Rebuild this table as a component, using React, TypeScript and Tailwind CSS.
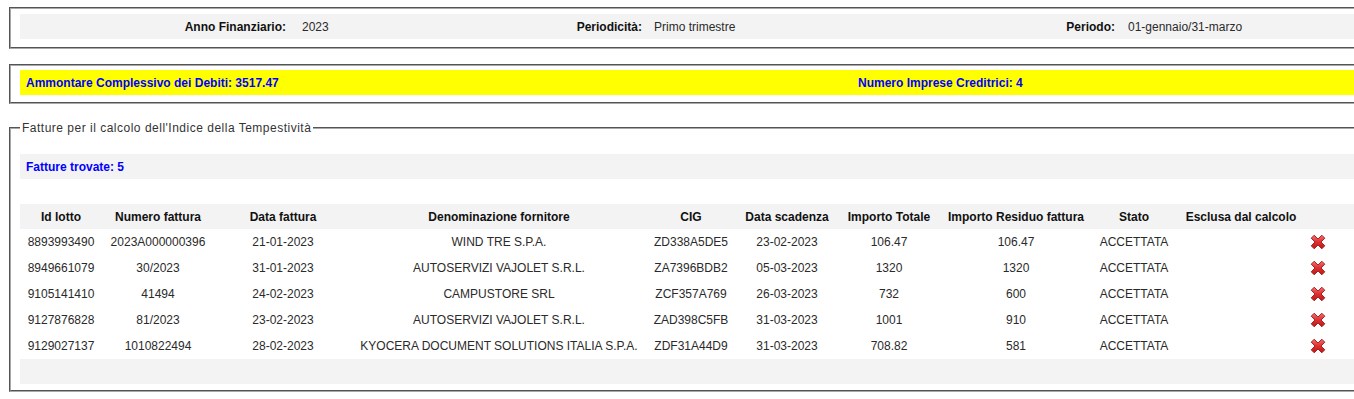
import React from "react";

const rows = [
  ["8893993490", "2023A000000396", "21-01-2023", "WIND TRE S.P.A.", "ZD338A5DE5", "23-02-2023", "106.47", "106.47", "ACCETTATA"],
  ["8949661079", "30/2023", "31-01-2023", "AUTOSERVIZI VAJOLET S.R.L.", "ZA7396BDB2", "05-03-2023", "1320", "1320", "ACCETTATA"],
  ["9105141410", "41494", "24-02-2023", "CAMPUSTORE SRL", "ZCF357A769", "26-03-2023", "732", "600", "ACCETTATA"],
  ["9127876828", "81/2023", "23-02-2023", "AUTOSERVIZI VAJOLET S.R.L.", "ZAD398C5FB", "31-03-2023", "1001", "910", "ACCETTATA"],
  ["9129027137", "1010822494", "28-02-2023", "KYOCERA DOCUMENT SOLUTIONS ITALIA S.P.A.", "ZDF31A44D9", "31-03-2023", "708.82", "581", "ACCETTATA"],
];

const headers = [
  "Id lotto",
  "Numero fattura",
  "Data fattura",
  "Denominazione fornitore",
  "CIG",
  "Data scadenza",
  "Importo Totale",
  "Importo Residuo fattura",
  "Stato",
  "Esclusa dal calcolo",
  "",
  "",
];

const gridCols =
  "grid grid-cols-[82px_112px_138px_294px_90px_102px_102px_152px_84px_130px_24px_1fr]";

function RedX() {
  return (
    <svg width="16" height="16" viewBox="0 0 16 16">
      <defs>
        <linearGradient id="rx" x1="0" y1="0" x2="0" y2="1">
          <stop offset="0" stopColor="#f07070" />
          <stop offset="0.5" stopColor="#dc3030" />
          <stop offset="1" stopColor="#b81818" />
        </linearGradient>
      </defs>
      <polygon
        points="1.2,4.2 4.2,1.2 8,5 11.8,1.2 14.8,4.2 11,8 14.8,11.8 11.8,14.8 8,11 4.2,14.8 1.2,11.8 5,8"
        fill="url(#rx)"
        stroke="#a01414"
        strokeWidth="0.9"
        strokeLinejoin="round"
      />
    </svg>
  );
}

export default function App() {
  return (
    <div className="w-[1354px] h-[399px] overflow-hidden bg-white font-['Liberation_Sans',Arial,sans-serif] text-[12px] text-[#2a2a2a]">
      <div className="w-[1420px] pl-[9px] pt-[7px]">
        {/* Box 1 */}
        <div className="border-2 [border-style:groove] border-[#a8a8a8] pl-[9px] pt-[5px] pb-[8px]">
          <div className="bg-[#f3f3f3] h-[25px] flex items-center">
            <div className="w-[266px] text-right font-bold text-[#111]">Anno Finanziario:</div>
            <div className="w-[200px] pl-[16px]">2023</div>
            <div className="w-[156px] text-right font-bold text-[#111]">Periodicità:</div>
            <div className="w-[300px] pl-[12px]">Primo trimestre</div>
            <div className="w-[173px] text-right font-bold text-[#111]">Periodo:</div>
            <div className="pl-[13px]">01-gennaio/31-marzo</div>
          </div>
        </div>

        {/* Box 2 */}
        <div className="mt-[15px] border-2 [border-style:groove] border-[#a8a8a8] pl-[9px] pt-[4px] pb-[7px]">
          <div className="bg-[#ffff00] h-[25px] flex items-center font-bold text-[#0000ff]">
            <div className="w-[838px] pl-[6px]">Ammontare Complessivo dei Debiti: 3517.47</div>
            <div>Numero Imprese Creditrici: 4</div>
          </div>
        </div>

        {/* Fieldset */}
        <fieldset className="mt-[15px] border-2 [border-style:groove] border-[#a8a8a8] pl-[9px] pb-[6px]">
          <legend className="px-[2px] tracking-[0.5px] text-[#333]">Fatture per il calcolo dell'Indice della Tempestività</legend>
          <div className="mt-[17px] bg-[#f3f3f3] h-[25px] flex items-center pl-[6px] font-bold text-[#0000ff]">
            Fatture trovate: 5
          </div>
          <div className="mt-[25px]">
            <div className={`${gridCols} bg-[#f3f3f3] h-[25px] items-center font-bold text-[#111]`}>
              {headers.map((h, i) => (
                <div key={i} className="text-center whitespace-nowrap">
                  {h}
                </div>
              ))}
            </div>
            {rows.map((r, ri) => (
              <div key={ri} className={`${gridCols} h-[26px] items-center`}>
                {r.map((c, ci) => (
                  <div key={ci} className="text-center whitespace-nowrap">
                    {c}
                  </div>
                ))}
                <div />
                <div className="flex justify-center items-center">
                  <RedX />
                </div>
                <div />
              </div>
            ))}
            <div className="bg-[#f3f3f3] h-[25px]" />
          </div>
        </fieldset>
      </div>
    </div>
  );
}
